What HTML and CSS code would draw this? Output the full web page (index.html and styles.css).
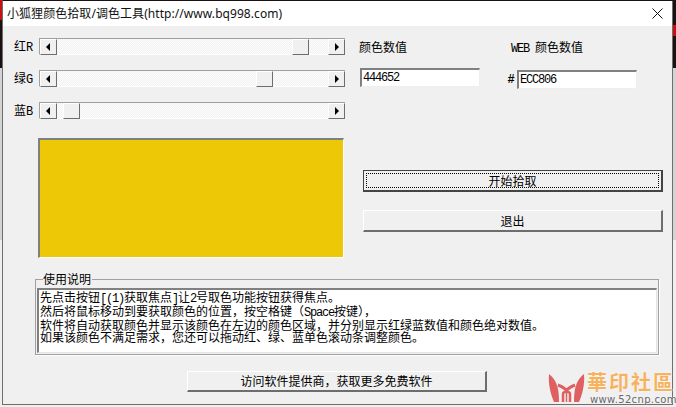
FILE: index.html
```html
<!DOCTYPE html>
<html lang="zh-CN">
<head>
<meta charset="utf-8">
<title>小狐狸颜色拾取</title>
<link rel="stylesheet" href="styles.css">
</head>
<body>
<div class="window">
  <header class="titlebar">
    <span class="title">小狐狸颜色拾取/调色工具(http://www.bq998.com)</span>
    <svg class="close" width="11" height="11" viewBox="0 0 11 11"><path d="M.5.5l10 10M10.500.5l-10 10" stroke="#111" stroke-width="1" fill="none"/></svg>
  </header>
  <main class="client">
    <div class="top">
      <section class="left">
        <div class="sliders">
          <div class="slider-row">
            <span class="label">红<span class="latin">R</span></span>
            <div class="scrollbar"><span class="arrow arrow-l"></span><div class="track"><span class="thumb thumb-r"></span></div><span class="arrow arrow-r"></span></div>
          </div>
          <div class="slider-row">
            <span class="label">绿<span class="latin">G</span></span>
            <div class="scrollbar"><span class="arrow arrow-l"></span><div class="track"><span class="thumb thumb-g"></span></div><span class="arrow arrow-r"></span></div>
          </div>
          <div class="slider-row">
            <span class="label">蓝<span class="latin">B</span></span>
            <div class="scrollbar"><span class="arrow arrow-l"></span><div class="track"><span class="thumb thumb-b"></span></div><span class="arrow arrow-r"></span></div>
          </div>
        </div>
        <div class="swatch"></div>
      </section>
      <section class="right">
        <div class="values">
          <div class="value-col">
            <span class="value-label">颜色数值</span>
            <input class="field" value="444652">
          </div>
          <div class="value-col web-col">
            <span class="value-label"><span class="latin web">WEB</span>颜色数值</span>
            <div class="hash-row"><span class="latin hash">#</span><input class="field" value="ECC806"></div>
          </div>
        </div>
        <div class="actions">
          <button class="btn btn-default"><span class="focus">开始拾取</span></button>
          <button class="btn">退出</button>
        </div>
      </section>
    </div>
    <section class="group">
      <span class="legend">使用说明</span>
      <div class="memo">先点击按钮<span class="latin">[(1)</span>获取焦点<span class="latin">]</span>让<span class="latin">2</span>号取色功能按钮获得焦点。<br>然后将鼠标移动到要获取颜色的位置，按空格键（<span class="latin">Space</span>按键），<br>软件将自动获取颜色并显示该颜色在左边的颜色区域，并分别显示红绿蓝数值和颜色绝对数值。<br>如果该颜色不满足需求，您还可以拖动红、绿、蓝单色滚动条调整颜色。</div>
    </section>
    <div class="footer"><button class="btn btn-visit">访问软件提供商，获取更多免费软件</button></div>
  </main>
</div>
<div class="watermark">
  <svg class="wm-logo" width="37" height="30" viewBox="0 0 37 30"><g fill="#de6060"><path d="M1 1C0 12 3 22 6 29H11C11 18 10 8 1 1Z"/><path d="M36 1C37 12 34 22 31 29H26C26 18 27 8 36 1Z"/></g><g fill="none" stroke="#de6060"><path d="M10 12C13 13 16 15 18.500 17C21 15 24 13 27 12" stroke-width="3"/><path d="M15 29V21C15 18 22 18 22 21V29" stroke-width="2.500"/><path d="M18.500 20V29" stroke-width="1.500"/></g></svg>
  <div class="wm-text"><span class="wm-cn">華印社區</span><span class="wm-url">www.52cnp.com</span></div>
</div>
</body>
</html>
```
FILE: styles.css
```css
* { box-sizing: border-box; }
html, body { margin: 0; height: 100%; }
body {
  width: 676px;
  height: 407px;
  overflow: hidden;
  padding: 1px 3px 0 2px;
  position: relative;
  background:
    linear-gradient(#c81010, #c81010) 0 0 / 3px 20px no-repeat,
    linear-gradient(#c81010, #c81010) 673px 25px / 3px 11px no-repeat,
    linear-gradient(#1a1212 0 68px, #d4d4d4 68px 240px, #efefef 240px);
  font-family: "Noto Sans CJK SC", "Noto Sans", sans-serif;
  font-size: 12px;
  color: #000;
}
.window {
  width: 671px;
  height: 404px;
  background: #f0f0f0;
  border: 1px solid #6e6e6e;
  border-top: 0;
  display: flex;
  flex-direction: column;
}
.titlebar {
  height: 25px;
  flex: none;
  background: #fff;
  display: flex;
  align-items: center;
  justify-content: space-between;
  padding: 0 9px 0 4px;
}
.title { font-family: "Noto Sans", "Noto Sans CJK SC", sans-serif; font-size: 12px; line-height: 25px; color: #111; letter-spacing: .06px; }
.client { flex: 1; display: flex; flex-direction: column; padding: 12px 0 0 11px; }
.top { display: flex; height: 241px; flex: none; }
.left { width: 331px; flex: none; }
.sliders { display: flex; flex-direction: column; gap: 15px; }
.slider-row { display: flex; align-items: center; height: 17px; }
.label { width: 25px; flex: none; line-height: 17px; }
.latin { font-family: "Liberation Mono", monospace; font-size: 12px; letter-spacing: -1.200px; }
.scrollbar {
  width: 306px;
  height: 17px;
  display: flex;
  border-top: 1px solid #a0a0a0;
  border-left: 1px solid #a0a0a0;
  border-bottom: 1px solid #fff;
  background-color: #f8f8f8;
}
.track { flex: 1; position: relative; background-image: repeating-conic-gradient(#f0f0f0 0 25%, #fff 0 50%); background-size: 2px 2px; }
.arrow, .thumb {
  width: 17px;
  height: 16px;
  background: #f0f0f0;
  border-style: solid;
  border-width: 1px;
  border-color: #fff #6d6d6d #6d6d6d #fff;
  display: block;
  flex: none;
  position: relative;
}
.arrow::after {
  content: "";
  position: absolute;
  top: 3px;
  border-style: solid;
  border-width: 4px 0 4px 4px;
  border-color: transparent transparent transparent #000;
}
.arrow-l::after { left: 5px; transform: scaleX(-1); }
.arrow-r::after { left: 6px; }
.thumb { position: absolute; top: 0; }
.thumb-r { left: 235px; }
.thumb-g { left: 199px; }
.thumb-b { left: 6px; }
.swatch {
  width: 306px;
  height: 120px;
  margin: 19px 0 0 24px;
  background: #ecc806;
  border-style: solid;
  border-width: 2px 1px 1px 2px;
  border-color: #808080 #fff #fff #808080;
}
.right { flex: 1; margin-left: 14px; width: 304px; display: flex; flex-direction: column; }
.values { display: flex; height: 50px; margin-top: 1px; }
.value-col { width: 152px; display: flex; flex-direction: column; gap: 13px; }
.value-label { line-height: 16px; white-space: nowrap; }
.web { display: inline-block; width: 24px; }
.field {
  width: 120px;
  height: 19px;
  padding: 0 0 0 1px;
  margin: 0 0 0 1px;
  background: #fff;
  border-style: solid;
  border-width: 2px 1px 1px 2px;
  border-color: #808080 #eee #eee #808080;
  font-family: "Liberation Mono", monospace;
  font-size: 12px;
  letter-spacing: -1.200px;
  outline: none;
  color: #000;
}
.hash-row { display: flex; align-items: center; gap: 1px; margin-left: -5px; }
.hash { width: 9px; font-weight: 700; text-align: center; }
.actions { margin-top: 81px; margin-left: 4px; display: flex; flex-direction: column; gap: 18px; }
.btn {
  width: 300px;
  height: 22px;
  padding: 0;
  background: #f0f0f0;
  border-style: solid;
  border-width: 1px 2px 2px 1px;
  border-color: #fff #6d6d6d #6d6d6d #fff;
  font: inherit;
  line-height: 18px;
  color: #000;
  display: block;
}
.btn-default {
  border: 1px solid #444;
  border-right-width: 2px;
  border-bottom-width: 2px;
  padding: 2px;
}
.focus { display: block; height: 15px; line-height: 14px; border: 1px dotted #000; }
.group {
  width: 624px;
  height: 76px;
  margin: 0 0 0 21px;
  padding: 8px 0 0 1px;
  position: relative;
  border: 1px solid #a0a0a0;
  box-shadow: 1px 1px 0 #fff;
}
.legend { position: absolute; left: 7px; top: -7px; background: #f0f0f0; line-height: 12px; padding-right: 1px; }
.memo {
  width: 620px;
  height: 65px;
  background: #fff;
  border-style: solid;
  border-width: 2px 1px 1px 2px;
  border-color: #808080 #e4e4e4 #e4e4e4 #808080;
  padding: 1px 0 0 1px;
  line-height: 12px;
  white-space: nowrap;
  overflow: hidden;
}
.footer { margin: 16px 0 0 173px; }
.btn-visit { height: 21px; }
.watermark {
  position: absolute;
  left: 548px;
  top: 373px;
  display: flex;
  align-items: flex-start;
  gap: 2px;
  text-shadow: 0 0 2px #fff;
}
.wm-logo { flex: none; }
.wm-text { display: flex; flex-direction: column; line-height: 1; margin-top: -2px; }
.wm-cn { font-size: 20px; line-height: 21px; letter-spacing: 2px; color: #f6b25f; font-weight: 700; white-space: nowrap; }
.wm-url { font-family: "DejaVu Sans", sans-serif; font-size: 10px; line-height: 10px; color: #666; margin: 3px 0 0 3px; letter-spacing: .35px; white-space: nowrap; }
```
